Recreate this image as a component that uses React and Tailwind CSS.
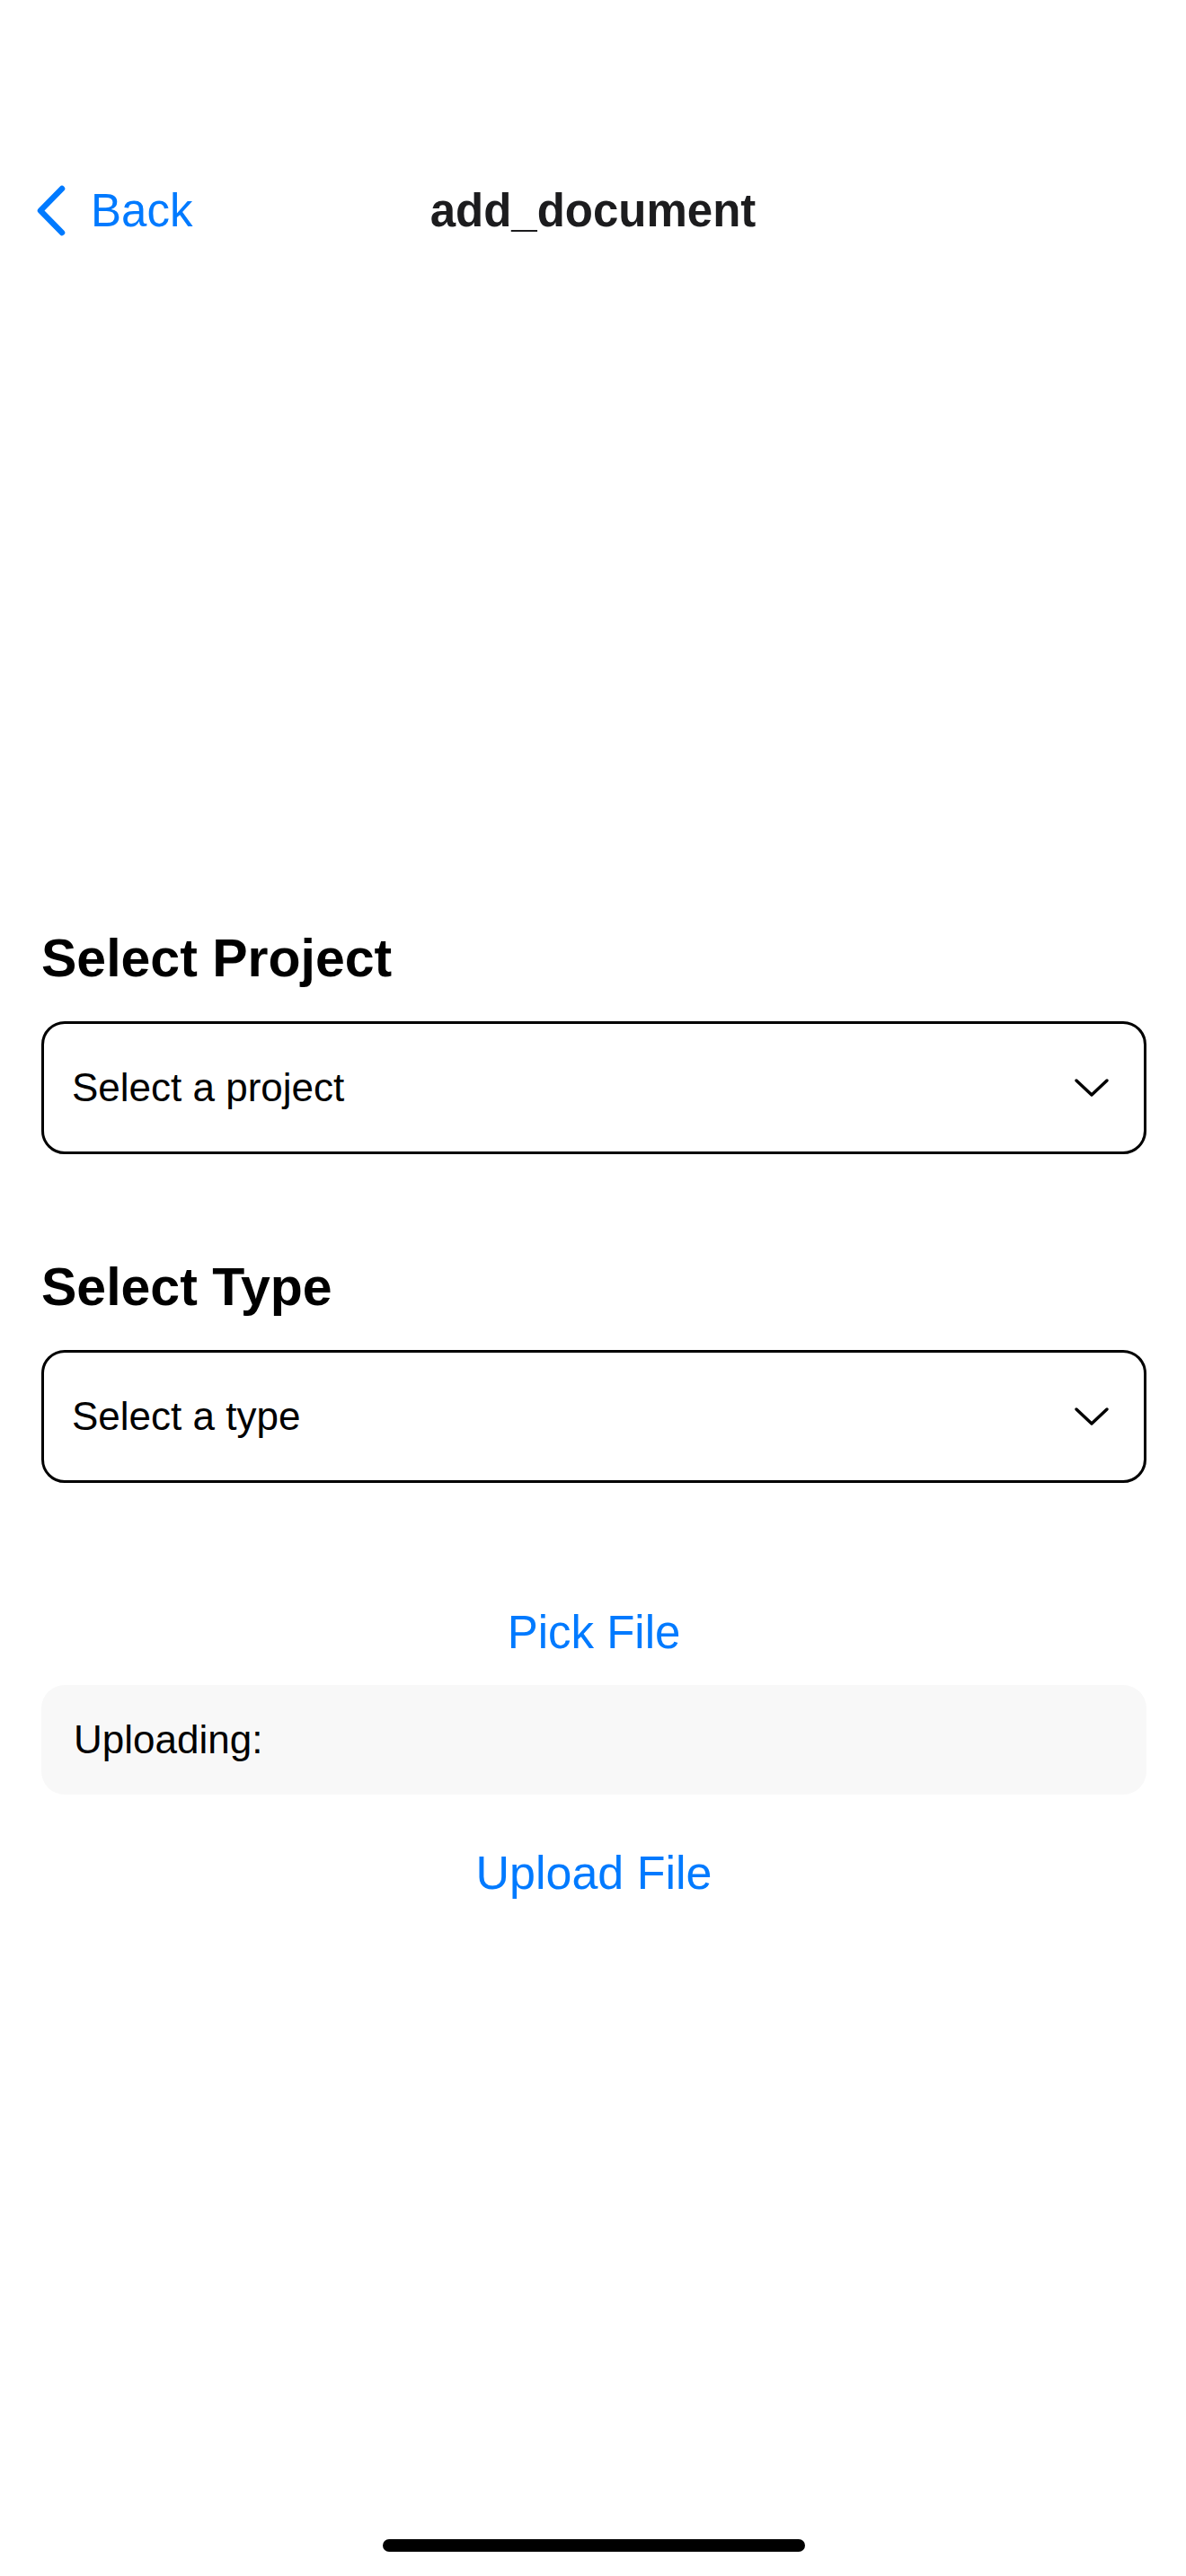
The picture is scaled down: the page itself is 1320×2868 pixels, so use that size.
import React from 'react';

const font = { fontFamily: '"Liberation Sans", Arial, sans-serif' };

const Chevron = () => (
  <svg width="40" height="22" viewBox="0 0 40 22" fill="none">
    <polyline points="3,3 20,19 37,3" stroke="#000" strokeWidth="3.5" strokeLinecap="round" strokeLinejoin="round" />
  </svg>
);

const SelectBox = ({ placeholder }) => (
  <div className="flex h-[148px] items-center justify-between rounded-[26px] border-[3px] border-black pl-[31px] pr-[38px]">
    <span className="text-[44px] leading-none text-black">{placeholder}</span>
    <Chevron />
  </div>
);

export default function App() {
  return (
    <div className="relative h-[2868px] w-[1320px] overflow-hidden bg-white pt-[180px]" style={font}>
      {/* nav bar */}
      <div className="relative flex h-[108px] items-center">
        <div className="flex items-center pl-[40px] text-[#007AFF]">
          <svg width="33" height="57" viewBox="0 0 33 57" fill="none">
            <polyline points="29,4 5,28.5 29,53" stroke="#007AFF" strokeWidth="6.5" strokeLinecap="round" strokeLinejoin="round" />
          </svg>
          <span className="ml-[28px] text-[51px] leading-none">Back</span>
        </div>
        <div className="pointer-events-none absolute left-0 right-0 text-center text-[51px] font-bold leading-none text-[#1c1c1e]">
          add_document
        </div>
      </div>

      <div className="mt-[743px] pl-[46px] pr-[44px]">
        <h2 className="text-[59px] font-bold leading-[72px] text-black">Select Project</h2>
        <div className="mt-[34px]">
          <SelectBox placeholder="Select a project" />
        </div>

        <h2 className="mt-[112px] text-[59px] font-bold leading-[72px] text-black">Select Type</h2>
        <div className="mt-[34px]">
          <SelectBox placeholder="Select a type" />
        </div>

        <div className="mt-[136px] text-center text-[51px] leading-[61px] text-[#007AFF]">Pick File</div>

        <div className="mt-[28px] flex h-[122px] items-center rounded-[26px] bg-[#f8f8f8] px-[36px]">
          <span className="text-[44px] leading-none text-black">Uploading:</span>
        </div>

        <div className="mt-[57px] text-center text-[52px] leading-[61px] text-[#007AFF]">Upload File</div>
      </div>

      {/* home indicator */}
      <div className="absolute bottom-[27px] left-[426px] h-[14px] w-[470px] rounded-full bg-black" />
    </div>
  );
}
